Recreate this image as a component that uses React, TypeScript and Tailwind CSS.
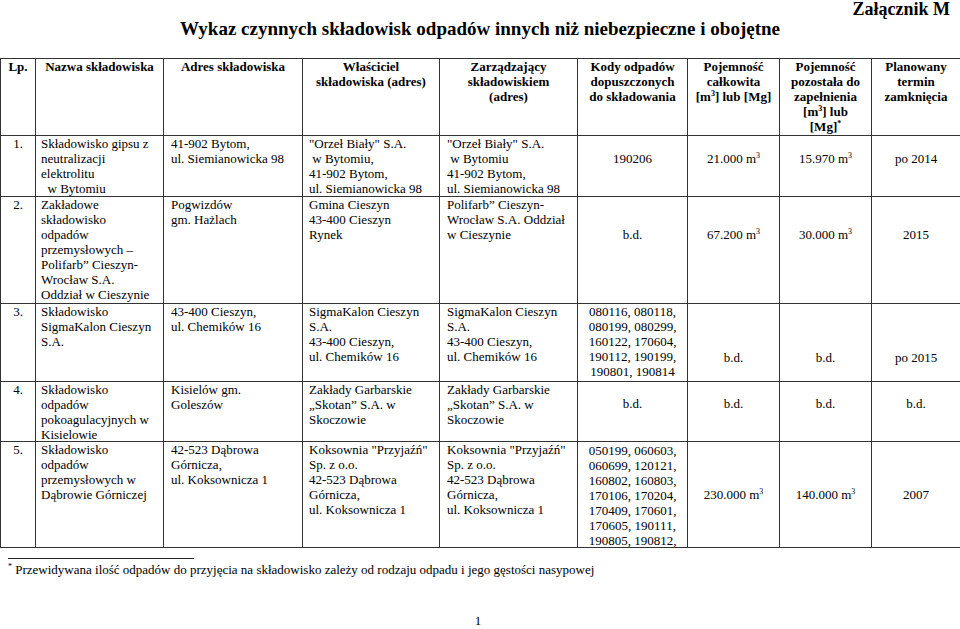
import type { ReactNode } from "react";

type Row = {
  no: string;
  h: string;
  name: string[];
  addr: string[];
  owner: string[];
  manager: string[];
  codes: string[];
  codesPad: string;
  total: ReactNode;
  left: ReactNode;
  end: string;
  valPad: string;
};

const M3 = ({ v }: { v: string }) => (
  <>
    {v} m<sup className="text-[8px] -top-[5px]">3</sup>
  </>
);

const rows: Row[] = [
  {
    no: "1.",
    h: "h-[60px]",
    name: ["Składowisko gipsu z", "neutralizacji", "elektrolitu", "  w Bytomiu"],
    addr: ["41-902 Bytom,", "ul. Siemianowicka 98"],
    owner: ['"Orzeł Biały" S.A.', " w Bytomiu,", "41-902 Bytom,", "ul. Siemianowicka 98"],
    manager: ['"Orzeł Biały" S.A.', " w Bytomiu", "41-902 Bytom,", "ul. Siemianowicka 98"],
    codes: ["190206"],
    codesPad: "pt-[15px]",
    total: <M3 v="21.000" />,
    left: <M3 v="15.970" />,
    end: "po 2014",
    valPad: "pt-[15px]",
  },
  {
    no: "2.",
    h: "h-[106px]",
    name: [
      "Zakładowe",
      "składowisko",
      "odpadów",
      "przemysłowych –",
      "Polifarb” Cieszyn-",
      "Wrocław S.A.",
      "Oddział w Cieszynie",
    ],
    addr: ["Pogwizdów", "gm. Hażlach"],
    owner: ["Gmina Cieszyn", "43-400 Cieszyn", "Rynek"],
    manager: ["Polifarb” Cieszyn-", "Wrocław S.A. Oddział", "w Cieszynie"],
    codes: ["b.d."],
    codesPad: "pt-[30px]",
    total: <M3 v="67.200" />,
    left: <M3 v="30.000" />,
    end: "2015",
    valPad: "pt-[30px]",
  },
  {
    no: "3.",
    h: "h-[77px]",
    name: ["Składowisko", "SigmaKalon Cieszyn", "S.A."],
    addr: ["43-400 Cieszyn,", "ul. Chemików 16"],
    owner: ["SigmaKalon Cieszyn", "S.A.", "43-400 Cieszyn,", "ul. Chemików 16"],
    manager: ["SigmaKalon Cieszyn", "S.A.", "43-400 Cieszyn,", "ul. Chemików 16"],
    codes: [
      "080116, 080118,",
      "080199, 080299,",
      "160122, 170604,",
      "190112, 190199,",
      "190801, 190814",
    ],
    codesPad: "pt-0",
    total: "b.d.",
    left: "b.d.",
    end: "po 2015",
    valPad: "pt-[46px]",
  },
  {
    no: "4.",
    h: "h-[59px]",
    name: ["Składowisko", "odpadów", "pokoagulacyjnych w", "Kisielowie"],
    addr: ["Kisielów gm.", "Goleszów"],
    owner: ["Zakłady Garbarskie", "„Skotan” S.A. w", "Skoczowie"],
    manager: ["Zakłady Garbarskie", "„Skotan” S.A. w", "Skoczowie"],
    codes: ["b.d."],
    codesPad: "pt-[14px]",
    total: "b.d.",
    left: "b.d.",
    end: "b.d.",
    valPad: "pt-[14px]",
  },
  {
    no: "5.",
    h: "h-[105px]",
    name: ["Składowisko", "odpadów", "przemysłowych w", "Dąbrowie Górniczej"],
    addr: ["42-523 Dąbrowa", "Górnicza,", "ul. Koksownicza 1"],
    owner: ['Koksownia "Przyjaźń"', "Sp. z o.o.", "42-523 Dąbrowa", "Górnicza,", "ul. Koksownicza 1"],
    manager: ['Koksownia "Przyjaźń"', "Sp. z o.o.", "42-523 Dąbrowa", "Górnicza,", "ul. Koksownicza 1"],
    codes: [
      "050199, 060603,",
      "060699, 120121,",
      "160802, 160803,",
      "170106, 170204,",
      "170409, 170601,",
      "170605, 190111,",
      "190805, 190812,",
    ],
    codesPad: "pt-[1px]",
    total: <M3 v="230.000" />,
    left: <M3 v="140.000" />,
    end: "2007",
    valPad: "pt-[45px]",
  },
];

function Lines({ lines }: { lines: string[] }) {
  return (
    <>
      {lines.map((l, i) => (
        <div key={i} className="whitespace-pre">
          {l}
        </div>
      ))}
    </>
  );
}

function Td({ h, className, children }: { h: string; className?: string; children: ReactNode }) {
  return (
    <td className="border border-[#333] p-0 align-top">
      <div className={`overflow-hidden ${h} ${className ?? ""}`}>{children}</div>
    </td>
  );
}

function Th({ children }: { children: ReactNode }) {
  return (
    <td className="border border-[#333] p-0 align-top">
      <div className="h-[76px] overflow-hidden text-center font-bold">{children}</div>
    </td>
  );
}

export default function App() {
  return (
    <div className="w-[960px] h-[629px] overflow-hidden bg-white text-black font-['Liberation_Serif',serif]">
      <div className="text-right pr-[10px] text-[18px] leading-[18px] font-bold">Załącznik M</div>
      <h1 className="text-center text-[19px] leading-[22px] font-bold">
        Wykaz czynnych składowisk odpadów innych niż niebezpieczne i obojętne
      </h1>

      <table className="mt-[18px] w-[960px] table-fixed border-collapse text-[13px] leading-[15px]">
        <colgroup>
          <col className="w-[35px]" />
          <col className="w-[128px]" />
          <col className="w-[139px]" />
          <col className="w-[137px]" />
          <col className="w-[138px]" />
          <col className="w-[110px]" />
          <col className="w-[92px]" />
          <col className="w-[92px]" />
          <col className="w-[89px]" />
        </colgroup>
        <tbody>
          <tr>
            <Th>Lp.</Th>
            <Th>Nazwa składowiska</Th>
            <Th>Adres składowiska</Th>
            <Th>
              Właściciel
              <br />
              składowiska (adres)
            </Th>
            <Th>
              Zarządzający
              <br />
              składowiskiem
              <br />
              (adres)
            </Th>
            <Th>
              Kody odpadów
              <br />
              dopuszczonych
              <br />
              do składowania
            </Th>
            <Th>
              Pojemność
              <br />
              całkowita
              <br />
              [m<sup className="text-[8px] -top-[5px]">3</sup>] lub [Mg]
            </Th>
            <Th>
              Pojemność
              <br />
              pozostała do
              <br />
              zapełnienia
              <br />
              [m<sup className="text-[8px] -top-[5px]">3</sup>] lub
              <br />
              [Mg]<sup className="text-[8px] -top-[5px]">*</sup>
            </Th>
            <Th>
              Planowany
              <br />
              termin
              <br />
              zamknięcia
            </Th>
          </tr>
          {rows.map((r) => (
            <tr key={r.no}>
              <Td h={r.h} className="text-center">
                {r.no}
              </Td>
              <Td h={r.h} className="pl-[5px]">
                <Lines lines={r.name} />
              </Td>
              <Td h={r.h} className="pl-[7px]">
                <Lines lines={r.addr} />
              </Td>
              <Td h={r.h} className="pl-[6px]">
                <Lines lines={r.owner} />
              </Td>
              <Td h={r.h} className="pl-[7px]">
                <Lines lines={r.manager} />
              </Td>
              <Td h={r.h} className={`text-center ${r.codesPad}`}>
                <Lines lines={r.codes} />
              </Td>
              <Td h={r.h} className={`text-center ${r.valPad}`}>
                {r.total}
              </Td>
              <Td h={r.h} className={`text-center ${r.valPad}`}>
                {r.left}
              </Td>
              <Td h={r.h} className={`text-center ${r.valPad}`}>
                {r.end}
              </Td>
            </tr>
          ))}
        </tbody>
      </table>

      <div className="ml-[8px] mt-[10px] h-px w-[186px] bg-[#222]" />
      <p className="mt-[3px] pl-[8px] text-[13px] leading-[15px]">
        <sup className="text-[8px] -top-[5px]">*</sup> Przewidywana ilość odpadów do przyjęcia na składowisko
        zależy od rodzaju odpadu i jego gęstości nasypowej
      </p>
      <p className="mt-[36px] text-center text-[13px] leading-[15px] pr-[4px]">1</p>
    </div>
  );
}
